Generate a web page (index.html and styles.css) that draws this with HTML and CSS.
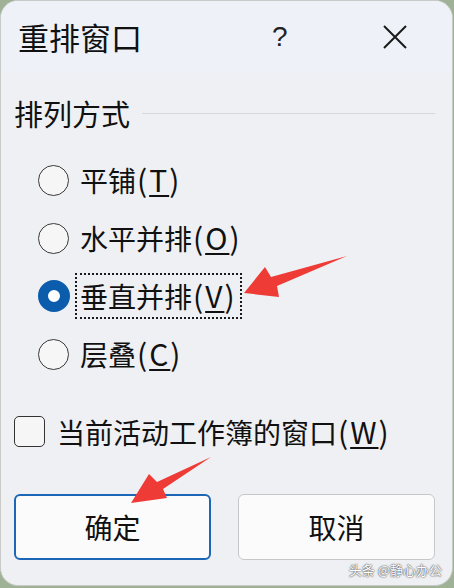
FILE: index.html
```html
<!DOCTYPE html>
<html lang="zh-CN">
<head>
    <meta charset="UTF-8">
    <meta name="viewport" content="width=device-width, initial-scale=1.0">
    <title>重排窗口</title>
    <link rel="stylesheet" href="styles.css">
</head>
<body>
    <div class="window">
        <div class="titlebar">
            <span class="title">重排窗口</span>
            <span class="help">?</span>
            <span class="close">
                <svg width="26" height="26" viewBox="0 0 26 26"><path d="M2 2L24 24M24 2L2 24" stroke="#1a1a1a" stroke-width="2" fill="none"/></svg>
            </span>
        </div>
        <div class="content">
            <div class="group-head">
                <span>排列方式</span>
                <div class="rule"></div>
            </div>
            <div class="options">
                <div class="option"><span class="radio"></span><span class="label">平铺<span class="key">(<u>T</u>)</span></span></div>
                <div class="option"><span class="radio"></span><span class="label">水平并排<span class="key">(<u>O</u>)</span></span></div>
                <div class="option"><span class="radio checked"></span><span class="label focused">垂直并排<span class="key">(<u>V</u>)</span></span></div>
                <div class="option"><span class="radio"></span><span class="label">层叠<span class="key">(<u>C</u>)</span></span></div>
            </div>
            <div class="check-row">
                <span class="checkbox"></span>
                <span class="check-label">当前活动工作簿的窗口<span class="key">(<u>W</u>)</span></span>
            </div>
            <div class="buttons">
                <button class="btn primary">确定</button>
                <button class="btn">取消</button>
            </div>
        </div>
        <div class="watermark">头条 @静心办公</div>
    </div>

    <!-- annotation arrows drawn over the dialog -->
    <svg class="arrows" width="454" height="588" viewBox="0 0 454 588">
        <polygon points="244,293 265,267 271,277 347,256 277,286 279,297" fill="#ee3b36"/>
        <polygon points="131,503 149,474 157,482 211,457 163,489 167,498" fill="#ee3b36"/>
    </svg>
</body>
</html>
```

FILE: styles.css
```css
html, body {
    margin: 0;
    padding: 0;
}
body {
    width: 454px;
    height: 588px;
    background: #9fb296;
    font-family: "Noto Sans CJK SC", "Noto Sans", sans-serif;
    color: #111;
    position: relative;
    overflow: hidden;
}
.window {
    width: 451px;
    height: 584px;
    background: #eff0f3;
    border: 1px solid #c9cbc8;
    border-radius: 18px;
    overflow: hidden;
    position: relative;
}
.titlebar {
    height: 72px;
    display: flex;
    align-items: center;
    background: #eef2f8;
    padding-left: 17px;
}
.title {
    font-size: 31px;
    line-height: 40px;
    width: 254px;
}
.help {
    font-family: "Liberation Sans", sans-serif;
    font-size: 28px;
    width: 30px;
    color: #222;
}
.close {
    margin-left: 80px;
    display: flex;
}
.content {
    padding: 0 17px 0 13px;
}
.group-head {
    display: flex;
    align-items: center;
    margin-top: 20px;
    height: 40px;
    font-size: 29px;
}
.rule {
    flex: 1;
    height: 1px;
    background: #d6d8db;
    margin-left: 12px;
    margin-top: 0;
}
.options {
    margin-top: 18px;
    padding-left: 24px;
}
.option {
    height: 58px;
    display: flex;
    align-items: center;
}
.radio {
    width: 31px;
    height: 31px;
    border: 1.5px solid #3a3a3a;
    border-radius: 50%;
    background: #f6f6f7;
    box-sizing: border-box;
    margin-right: 6px;
    flex: none;
}
.radio.checked {
    width: 32px;
    height: 32px;
    border: 10px solid #0b5cad;
    background: #fff;
    margin-right: 5px;
}
.label {
    font-size: 28px;
    line-height: 37px;
    padding: 2px 3px;
    border: 2px dotted transparent;
}
.label.focused {
    border-color: #1a1a1a;
}
.key {
    font-size: 30px;
    letter-spacing: 2px;
    margin-left: 1px;
}
u {
    text-decoration-thickness: 2px;
    text-underline-offset: 3px;
}
.check-row {
    margin-top: 28px;
    height: 40px;
    display: flex;
    align-items: center;
}
.checkbox {
    width: 31px;
    height: 31px;
    border: 1.5px solid #333;
    border-radius: 5px;
    box-sizing: border-box;
    background: #f6f6f7;
    margin-right: 12px;
}
.check-label {
    font-size: 28px;
}
.buttons {
    margin-top: 43px;
    display: flex;
    gap: 27px;
}
.btn {
    width: 197px;
    height: 66px;
    background: #fbfbfc;
    border: 1px solid #c6c7c8;
    border-radius: 6px;
    font-family: "Noto Sans CJK SC", sans-serif;
    font-size: 28px;
    color: #111;
    padding: 0;
}
.btn.primary {
    border: 2px solid #1b66b6;
}
.watermark {
    position: absolute;
    right: 10px;
    bottom: 6px;
    font-size: 13px;
    color: #fff;
    text-shadow: 0 0 2px #555, 0 0 1px #333;
}
.arrows {
    position: absolute;
    left: 0;
    top: 0;
    pointer-events: none;
}
```
